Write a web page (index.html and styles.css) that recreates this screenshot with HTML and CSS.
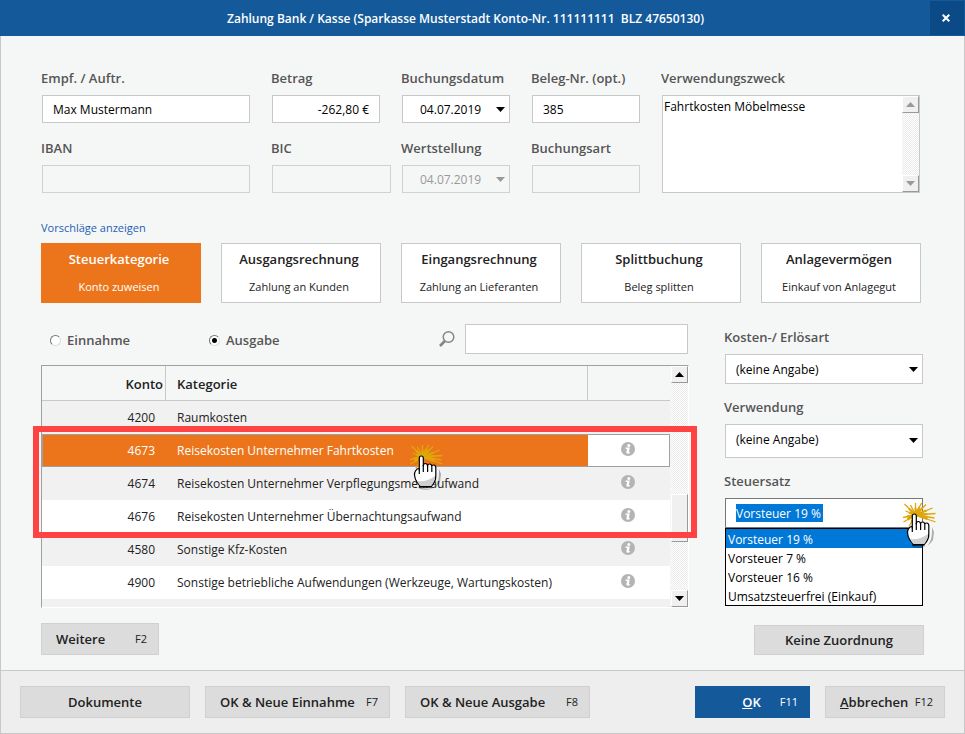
FILE: index.html
```html
<!DOCTYPE html>
<html lang="de">
<head>
    <meta charset="UTF-8">
    <meta name="viewport" content="width=device-width, initial-scale=1.0">
    <title>Zahlung Bank / Kasse</title>
    <link rel="stylesheet" href="styles.css">
</head>
<body>
    <!-- shared icons -->
    <svg class="sprite" aria-hidden="true">
        <symbol id="info" viewBox="0 0 14 14">
            <circle cx="7" cy="7" r="7" fill="#b4b4b4"/>
            <circle cx="7.8" cy="3.4" r="1.5" fill="#fff"/>
            <path d="M4.600 5.600h4.200L7.800 10.200h1.300v.9q-1.200.8-2.600.7-1.400-.1-1.100-1.700l.7-3.200H4.600z" fill="#fff"/>
        </symbol>
        <symbol id="hand" viewBox="0 0 60 60">
            <g fill="none" stroke="#dfa60a">
                <path d="M22.500 22L11.500 11M22.500 22l0-12M22.500 22l6-12M22.500 22L33 11.500M22.500 22l17-7M22.500 22l20-1.500M22.500 22l19 3M22.500 22l20 7M22.500 22L16 33.500M22.500 22L10.500 29M22.500 22L10 24.500M22.500 22L12.500 18M22.500 22L17.500 12" stroke-width="1.300"/>
                <path d="M22.500 22L16 15.500M22.500 22l0-7M22.500 22l4-8M22.500 22l7-7M22.500 22l11-4.500M22.500 22l12-1M22.500 22l12 2M22.500 22l12 4M22.500 22L18.500 29M22.500 22L14.500 26.500M22.500 22L14 23.700M22.500 22L16 19.500" stroke-width="2.200"/>
            </g>
            <path d="M18 52q8 3 16 1 5-5 5-14l0-5 2 5-1 8q-6 10-20 7z" fill="#000" opacity=".3"/>
            <path d="M19.300 35V23q0-2 2-2t2 2v8q0-2.500 2-2.500t2.300 2.500q0-2 2-2t2.200 2.500q0-1.500 1.800-1.500 2 0 2.200 2.500v8.500q0 5-3 8.500l-1.500 2h-11l-3-4q-2.500-3-2.800-7.500-.2-5 4.800-7z" fill="#fff" stroke="#000" stroke-width="1.200" stroke-linejoin="round"/>
            <path d="M17 46q9 1.500 18-5 0 5-3.500 9.500H20z" fill="#cfcfcf"/>
            <path d="M19.300 34v5M23.300 30v7M27.600 31v6M31.800 32v5" fill="none" stroke="#000" stroke-width="1.200"/>
            <path d="M19.500 51.800h12" stroke="#000" stroke-width="1.800"/>
        </symbol>
    </svg>

    <div class="dialog">
        <header class="titlebar">
            <h1>Zahlung Bank / Kasse (Sparkasse Musterstadt Konto-Nr. 111111111&nbsp; BLZ 47650130)</h1>
            <button class="close" aria-label="Schließen">
                <svg width="8" height="8" viewBox="0 0 8 8"><path d="M.7.7l6.600 6.600M7.300.7L.7 7.300" stroke="#fff" stroke-width="2"/></svg>
            </button>
        </header>

        <main>
            <form class="payment">
                <div class="field">
                    <label for="empf">Empf. / Auftr.</label>
                    <input type="text" id="empf" value="Max Mustermann">
                </div>
                <div class="field">
                    <label for="betrag">Betrag</label>
                    <input type="text" id="betrag" class="amount" value="-262,80 €">
                </div>
                <div class="field">
                    <label for="datum">Buchungsdatum</label>
                    <select id="datum" class="date"><option>04.07.2019</option></select>
                </div>
                <div class="field">
                    <label for="beleg">Beleg-Nr. (opt.)</label>
                    <input type="text" id="beleg" value="385">
                </div>
                <div class="field purpose">
                    <label for="zweck">Verwendungszweck</label>
                    <div class="memo">
                        <textarea id="zweck">Fahrtkosten Möbelmesse</textarea>
                        <div class="scrollbar disabled">
                            <button type="button" aria-label="Nach oben"><span class="up"></span></button>
                            <button type="button" aria-label="Nach unten"><span class="down"></span></button>
                        </div>
                    </div>
                </div>
                <div class="field">
                    <label for="iban">IBAN</label>
                    <input type="text" id="iban" disabled>
                </div>
                <div class="field wide">
                    <label for="bic">BIC</label>
                    <input type="text" id="bic" disabled>
                </div>
                <div class="field">
                    <label for="wert">Wertstellung</label>
                    <select id="wert" class="date" disabled><option>04.07.2019</option></select>
                </div>
                <div class="field">
                    <label for="art">Buchungsart</label>
                    <input type="text" id="art" disabled>
                </div>
            </form>

            <a class="suggest" href="#">Vorschläge anzeigen</a>

            <div class="cards">
                <button class="card active"><b>Steuerkategorie</b><span>Konto zuweisen</span></button>
                <button class="card"><b>Ausgangsrechnung</b><span>Zahlung an Kunden</span></button>
                <button class="card"><b>Eingangsrechnung</b><span>Zahlung an Lieferanten</span></button>
                <button class="card"><b>Splittbuchung</b><span>Beleg splitten</span></button>
                <button class="card"><b>Anlagevermögen</b><span>Einkauf von Anlagegut</span></button>
            </div>

            <div class="assign">
                <section>
                    <div class="filter">
                        <label class="radio"><input type="radio" name="typ">Einnahme</label>
                        <label class="radio"><input type="radio" name="typ" checked>Ausgabe</label>
                        <label class="search-label" for="suche" aria-label="Suche">
                            <svg width="18" height="18" viewBox="0 0 18 18" fill="none">
                                <circle cx="10.500" cy="7" r="5.300" stroke="#858585" stroke-width="1.500"/>
                                <path d="M6.800 11L2 16" stroke="#858585" stroke-width="2.600"/>
                            </svg>
                        </label>
                        <input type="search" id="suche">
                    </div>

                    <div class="grid">
                        <div class="rows">
                            <table>
                                <thead>
                                    <tr><th class="konto">Konto</th><th>Kategorie</th><th class="info"></th></tr>
                                </thead>
                                <tbody>
                                    <tr><td class="konto">4200</td><td>Raumkosten</td><td class="info"></td></tr>
                                    <tr class="selected"><td class="konto">4673</td><td>Reisekosten Unternehmer Fahrtkosten</td><td class="info"><svg><use href="#info"/></svg></td></tr>
                                    <tr><td class="konto">4674</td><td>Reisekosten Unternehmer Verpflegungsmehraufwand</td><td class="info"><svg><use href="#info"/></svg></td></tr>
                                    <tr><td class="konto">4676</td><td>Reisekosten Unternehmer Übernachtungsaufwand</td><td class="info"><svg><use href="#info"/></svg></td></tr>
                                    <tr><td class="konto">4580</td><td>Sonstige Kfz-Kosten</td><td class="info"><svg><use href="#info"/></svg></td></tr>
                                    <tr><td class="konto">4900</td><td>Sonstige betriebliche Aufwendungen (Werkzeuge, Wartungskosten)</td><td class="info"><svg><use href="#info"/></svg></td></tr>
                                    <tr><td class="konto"></td><td></td><td class="info"></td></tr>
                                </tbody>
                            </table>
                        </div>
                        <div class="scrollbar">
                            <button aria-label="Nach oben"><span class="up"></span></button>
                            <div class="thumb"></div>
                            <button aria-label="Nach unten"><span class="down"></span></button>
                        </div>
                        <div class="marker"></div>
                        <svg class="hand hand-row" aria-hidden="true"><use href="#hand"/></svg>
                    </div>
                </section>

                <aside>
                    <div class="option">
                        <label for="kosten">Kosten-/ Erlösart</label>
                        <select id="kosten"><option>(keine Angabe)</option></select>
                    </div>
                    <div class="option">
                        <label for="verwendung">Verwendung</label>
                        <select id="verwendung" class="tall"><option>(keine Angabe)</option></select>
                    </div>
                    <div class="option">
                        <label for="steuer">Steuersatz</label>
                        <div class="combo">
                            <select id="steuer">
                                <option>Vorsteuer 19 %</option>
                            </select>
                            <ul class="list" role="listbox" aria-label="Steuersatz">
                                <li role="option" aria-selected="true">Vorsteuer 19 %</li>
                                <li role="option">Vorsteuer 7 %</li>
                                <li role="option">Vorsteuer 16 %</li>
                                <li role="option">Umsatzsteuerfrei (Einkauf)</li>
                            </ul>
                            <svg class="hand hand-combo" aria-hidden="true"><use href="#hand"/></svg>
                        </div>
                    </div>
                </aside>
            </div>

            <div class="actions">
                <button class="btn more"><b>Weitere</b><span>F2</span></button>
                <button class="btn none"><b>Keine Zuordnung</b></button>
            </div>
        </main>

        <footer>
            <button class="btn docs"><b>Dokumente</b></button>
            <button class="btn new"><b>OK &amp; Neue Einnahme</b><span>F7</span></button>
            <button class="btn new"><b>OK &amp; Neue Ausgabe</b><span>F8</span></button>
            <button class="btn ok"><b><u>O</u>K</b><span>F11</span></button>
            <button class="btn cancel"><b><u>A</u>bbrechen</b><span>F12</span></button>
        </footer>
    </div>
</body>
</html>
```
FILE: styles.css
```css
* {
    box-sizing: border-box;
}
body {
    margin: 0;
    font-family: "Open Sans", "Noto Sans", sans-serif;
    font-size: 12px;
    line-height: 20px;
    color: #222;
}
button, input, select, textarea {
    font: inherit;
    color: inherit;
    margin: 0;
    border-radius: 0;
}
button {
    padding: 0;
    border: 0;
    cursor: pointer;
}
b, th, label {
    font-size: 13px;
    font-weight: 600;
}
.sprite {
    display: none;
}
.dialog {
    min-height: 100vh;
    display: flex;
    flex-direction: column;
    background: #f5f7f7;
    border: 1px solid #c8c8c8;
    border-top: 0;
}

/* title bar */
.titlebar {
    display: flex;
    height: 36px;
    margin: 0 -1px;
    padding: 1px;
    background: #145a9b;
    color: white;
}
.titlebar h1 {
    flex: 1;
    margin: 0;
    font-size: 12px;
    font-weight: 600;
    line-height: 36px;
    text-align: center;
}
.close {
    display: flex;
    align-items: center;
    justify-content: center;
    width: 34px;
    padding-right: 2px;
    background: #0b4a86;
}

/* payment data */
main {
    flex: 1;
    padding: 32px 40px 15px;
}
.payment {
    display: grid;
    grid-template-columns: 210px 110px 110px 110px 1fr;
    gap: 15px 20px;
    padding-right: 3px;
}
.field, .option {
    display: flex;
    flex-direction: column;
}
label {
    color: #555;
}
.field label, .option label {
    margin-bottom: 7px;
}
.field input, .field select {
    width: calc(100% - 2px);
    margin-left: 1px;
    height: 28px;
}
.wide {
    margin-right: -11px;
}
.purpose {
    grid-column: 5;
    grid-row: 1 / 3;
}
input, select {
    padding: 0 10px;
    background-color: white;
    border: 1px solid #c8c8c8;
    color: black;
}
.amount {
    text-align: right;
}
select {
    appearance: none;
    padding-top: 2px;
    background: white url("data:image/svg+xml,%3Csvg xmlns='http://www.w3.org/2000/svg' width='9' height='5'%3E%3Cpath d='M0 0h9L4.500 5z'/%3E%3C/svg%3E") no-repeat right 4px center;
}
.date {
    padding-left: 17px;
}
input:disabled, select:disabled {
    background-color: transparent;
    border-color: #d0d2d2;
    color: #999;
    opacity: 1;
}
select:disabled {
    background-image: url("data:image/svg+xml,%3Csvg xmlns='http://www.w3.org/2000/svg' width='9' height='5'%3E%3Cpath fill='%23999' d='M0 0h9L4.500 5z'/%3E%3C/svg%3E");
}
.memo {
    display: flex;
    flex: 1;
    margin: 0 1px;
    background: white;
    border: 1px solid #c8c8c8;
}
.memo textarea {
    flex: 1;
    min-width: 0;
    padding: 1px 1px 0;
    border: 0;
    resize: none;
    color: black;
}

/* scroll bars */
.scrollbar {
    display: flex;
    flex-direction: column;
    width: 17px;
    background: repeating-conic-gradient(#ebebeb 0 25%, #fff 0 50%) 0 0 / 2px 2px;
}
.scrollbar button {
    display: flex;
    align-items: center;
    justify-content: center;
    height: 17px;
}
.scrollbar button, .thumb {
    background: #f0f0f0;
    border: 1px solid #fff;
    border-right-color: #999;
    border-bottom-color: #999;
}
.scrollbar button:last-child {
    margin-top: auto;
}
.up, .down {
    width: 9px;
    height: 5px;
    background: black;
    clip-path: polygon(50% 0, 100% 100%, 0 100%);
}
.down {
    clip-path: polygon(0 0, 100% 0, 50% 100%);
}
.disabled .up, .disabled .down {
    background: #999;
}
.thumb {
    height: 48px;
    margin-top: 111px;
}

/* category cards */
.suggest {
    display: block;
    width: max-content;
    margin: 25px 0 5px;
    color: #1a5fb4;
    text-decoration: none;
}
.cards {
    display: grid;
    grid-template-columns: repeat(5, 1fr);
    gap: 20px;
    padding-right: 3px;
}
.card {
    display: flex;
    flex-direction: column;
    align-items: center;
    justify-content: space-between;
    height: 60px;
    padding: 5px 4px 5px 0;
    background: white;
    border: 1px solid #c8c8c8;
}
.suggest, .card span, .btn span {
    font-size: 11px;
}
.card.active {
    background: #ec751b;
    border-color: #ec751b;
    color: white;
}

/* account table */
.assign {
    display: grid;
    grid-template-columns: 1fr 200px;
    gap: 35px;
    margin-top: 21px;
}
.filter {
    display: flex;
    align-items: center;
    height: 30px;
    margin: 0 1px 11px 0;
}
.radio {
    display: flex;
    align-items: center;
    flex: 0 0 159px;
    gap: 6px;
    padding: 2px 0 0 9px;
}
.radio input {
    appearance: none;
    width: 11px;
    height: 11px;
    padding: 0;
    border: 1px solid #ddd;
    border-top-color: #777;
    border-left-color: #777;
    border-radius: 50%;
}
.radio input:checked {
    background: radial-gradient(circle, black 2px, white 3px);
}
.search-label {
    display: flex;
    margin: 0 9px 0 auto;
}
#suche {
    width: 223px;
    height: 30px;
}
.grid {
    position: relative;
    display: flex;
    height: 243px;
    border: 1px solid #fff;
    border-top-color: #a0a0a0;
    border-left-color: #a0a0a0;
}
.rows {
    flex: 1;
    margin-right: 1px;
    overflow: hidden;
}
table {
    width: 100%;
    table-layout: fixed;
    border-collapse: separate;
    border-spacing: 0;
}
th, td {
    height: 33px;
    padding: 0 11px;
    text-align: left;
    white-space: nowrap;
}
th {
    height: 35px;
    padding: 2px 11px 0;
    border-right: 1px solid #c8c8c8;
    border-bottom: 1px solid #c8c8c8;
}
th.konto {
    padding-right: 2px;
}
th:last-child {
    border-right: 0;
}
.konto {
    width: 124px;
    text-align: right;
}
.info {
    width: 82px;
    padding: 0 2px 2px 0;
}
.info svg {
    display: block;
    width: 14px;
    height: 14px;
    margin: 0 auto 2px;
}
tbody tr:nth-child(odd) {
    background: #f1f1f1;
}
tbody tr:nth-child(even) {
    background: white;
}
.selected td {
    background: #ec751b;
    border-top: 1px solid #a0a0a0;
    border-bottom: 1px solid #a0a0a0;
    color: white;
}
.selected td:first-child {
    border-left: 1px solid #a0a0a0;
}
.selected td.info {
    background: white;
    border-right: 1px solid #a0a0a0;
}
.marker {
    position: absolute;
    top: 60px;
    left: -9px;
    right: -9px;
    height: 112px;
    border: 6px solid #ff4343;
    pointer-events: none;
}
.hand {
    position: absolute;
    width: 60px;
    height: 60px;
    pointer-events: none;
}
.hand-row {
    top: 69px;
    left: 358px;
}

/* options on the right */
aside {
    display: flex;
    flex-direction: column;
    gap: 13px;
    padding-top: 3px;
}
.option > select, .combo {
    height: 30px;
    margin: 0 1px;
}
.option > .tall {
    height: 34px;
    padding-bottom: 4px;
    background-position: right 4px top 13px;
}
.combo {
    position: relative;
    display: flex;
    align-items: center;
    padding-left: 10px;
    background: white;
    border: 1px solid #777;
}
.combo select {
    width: 87px;
    height: 18px;
    padding: 1px 0 0;
    border: 0;
    background: #0078d7;
    color: white;
    line-height: 17px;
}
.list {
    position: absolute;
    top: 29px;
    left: -1px;
    right: -1px;
    margin: 0;
    padding: 0;
    list-style: none;
    background: white;
    border: 1px solid black;
    color: black;
}
.list li {
    padding: 2px 2px 0;
    line-height: 17px;
}
.list li[aria-selected] {
    background: #0078d7;
    color: white;
}
.hand-combo {
    top: -6px;
    right: -31px;
}

/* buttons */
.btn {
    display: flex;
    align-items: center;
    justify-content: space-between;
    height: 32px;
    padding: 0 11px 0 14px;
    background: #dcdcdc;
    border: 1px solid #d0d0d0;
}
.actions {
    display: flex;
    align-items: flex-end;
    justify-content: space-between;
    margin-top: 15px;
}
.more {
    width: 118px;
}
.none {
    width: 170px;
    height: 30px;
}
.docs {
    width: 170px;
}
.none, .docs {
    justify-content: center;
    padding: 0;
}
footer {
    display: flex;
    gap: 15px;
    padding: 15px 19px;
    background: #eee;
    border-top: 1px solid #c8c8c8;
}
.new {
    width: 185px;
}
.ok {
    width: 115px;
    margin-left: auto;
    justify-content: flex-end;
    gap: 19px;
    background: #145a9b;
    border-color: #145a9b;
    color: white;
}
.cancel {
    width: 120px;
}
```
